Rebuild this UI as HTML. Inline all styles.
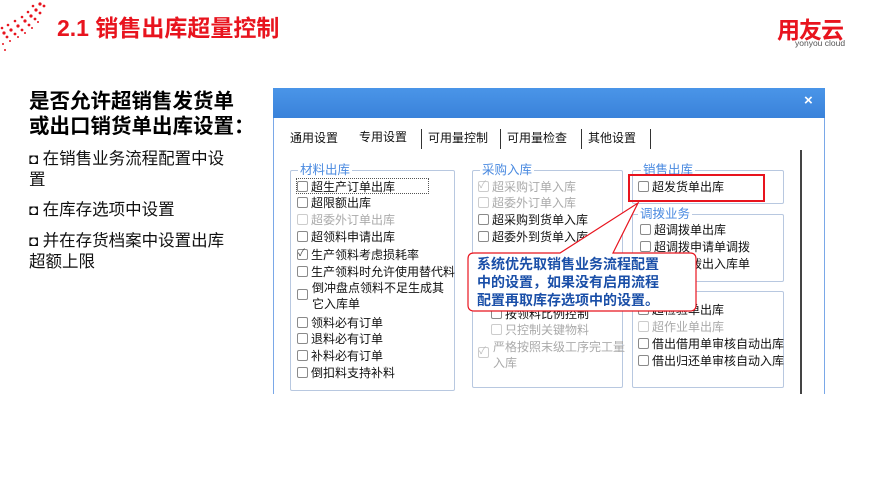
<!DOCTYPE html>
<html><head><meta charset="utf-8"><style>
*{margin:0;padding:0;box-sizing:border-box}
body{width:869px;height:488px;overflow:hidden;background:#fff;position:relative;font-family:"Liberation Sans","Noto Sans CJK SC",sans-serif}
.a{position:absolute;white-space:nowrap}
.t{font-size:12px;color:#111;line-height:14px}
.g{color:#aaa}
.cb{display:inline-block;width:11px;height:11px;border:1px solid #8a8a8a;border-radius:2px;background:#fff;vertical-align:-1px;margin-right:3px;position:relative}
.g .cb{border-color:#ccc}
.ck::after{content:"✓";position:absolute;left:0px;top:-3px;font-size:10px;color:#444}
.g .ck::after{color:#bbb}
.box{position:absolute;border:1px solid #b8c8e0;border-radius:2px}
.lg{position:absolute;background:#fff;color:#4a8ae0;font-size:12.5px;padding:0 2px;line-height:13px}
.bl{font-size:16.5px;line-height:20px;color:#111;white-space:normal;width:202px}
</style></head><body>
<svg class="a" style="left:0;top:0" width="60" height="55">
<g fill="#e8141e">
<circle cx="40" cy="4" r="1.6"/><circle cx="36" cy="10" r="1.6"/><circle cx="31" cy="16" r="1.6"/><circle cx="25" cy="21" r="1.6"/><circle cx="18" cy="26" r="1.6"/><circle cx="11" cy="30" r="1.6"/><circle cx="4" cy="33" r="1.6"/>
<circle cx="44" cy="6" r="1.4"/><circle cx="40" cy="13" r="1.4"/><circle cx="35" cy="19" r="1.4"/><circle cx="29" cy="25" r="1.4"/><circle cx="22" cy="30" r="1.4"/><circle cx="15" cy="34" r="1.4"/><circle cx="7" cy="37" r="1.4"/>
<circle cx="33" cy="6" r="1.3"/><circle cx="28" cy="12" r="1.3"/><circle cx="22" cy="17" r="1.3"/><circle cx="15" cy="21" r="1.3"/><circle cx="8" cy="25" r="1.3"/><circle cx="2" cy="28" r="1.3"/>
<circle cx="38" cy="22" r="1"/><circle cx="32" cy="28" r="1"/><circle cx="25" cy="33" r="1"/><circle cx="18" cy="37" r="1"/><circle cx="10" cy="41" r="1"/><circle cx="3" cy="44" r="1"/><circle cx="5" cy="50" r="1"/>
</g></svg>
<div class="a" style="left:57px;top:9px;font-size:23px;font-weight:bold;color:#e8141e">2.1 销售出库超量控制</div>
<div class="a" style="left:777px;top:11px;font-size:23px;font-weight:bold;color:#e8141e;letter-spacing:-1px">用友云</div>
<div class="a" style="left:795px;top:38px;font-size:8.5px;color:#555">yonyou cloud</div>
<div class="a" style="left:29px;top:89px;font-size:20.5px;font-weight:bold;line-height:25px;color:#000">是否允许超销售发货单<br>或出口销货单出库设置：</div>
<div class="a bl" style="left:29px;top:149px"><b style="font-size:15px">◘</b> 在销售业务流程配置中设置</div>
<div class="a bl" style="left:29px;top:200px"><b style="font-size:15px">◘</b> 在库存选项中设置</div>
<div class="a bl" style="left:29px;top:231px"><b style="font-size:15px">◘</b> 并在存货档案中设置出库超额上限</div>
<!-- dialog -->
<div class="a" style="left:273px;top:88px;width:552px;height:306px;background:#fff;border:1px solid #7aa8e8;border-bottom:none"></div>
<div class="a" style="left:273px;top:88px;width:552px;height:30px;background:linear-gradient(#4a95e8,#3a82da)"></div>
<div class="a" style="left:804px;top:92px;color:#fff;font-size:15px;font-weight:bold">×</div>
<div class="a" style="left:800px;top:150px;width:2px;height:244px;background:#444"></div>
<div class="a t" style="left:290px;top:131px">通用设置</div>
<div class="a t" style="left:359px;top:130px">专用设置</div>
<div class="a" style="left:421px;top:129px;width:1px;height:20px;background:#333"></div>
<div class="a t" style="left:428px;top:131px">可用量控制</div>
<div class="a" style="left:500px;top:129px;width:1px;height:20px;background:#333"></div>
<div class="a t" style="left:507px;top:131px">可用量检查</div>
<div class="a" style="left:581px;top:129px;width:1px;height:20px;background:#333"></div>
<div class="a t" style="left:588px;top:131px">其他设置</div>
<div class="a" style="left:650px;top:129px;width:1px;height:20px;background:#333"></div>
<div class="box" style="left:290px;top:170px;width:165px;height:221px"></div>
<div class="lg" style="left:298px;top:164px">材料出库</div>
<div class="box" style="left:472px;top:170px;width:151px;height:218px"></div>
<div class="lg" style="left:480px;top:164px">采购入库</div>
<div class="box" style="left:632px;top:170px;width:152px;height:34px"></div>
<div class="lg" style="left:641px;top:164px">销售出库</div>
<div class="box" style="left:632px;top:214px;width:152px;height:68px"></div>
<div class="lg" style="left:638px;top:208px">调拨业务</div>
<div class="box" style="left:632px;top:291px;width:152px;height:97px"></div>
<div class="a" style="left:296px;top:178px;width:133px;height:16px;border:1px dotted #555"></div>
<div class="a t" style="left:297px;top:180px"><span class="cb"></span>超生产订单出库</div>
<div class="a t" style="left:297px;top:196px"><span class="cb"></span>超限额出库</div>
<div class="a t g" style="left:297px;top:213px"><span class="cb"></span>超委外订单出库</div>
<div class="a t" style="left:297px;top:230px"><span class="cb"></span>超领料申请出库</div>
<div class="a t" style="left:297px;top:248px"><span class="cb ck"></span>生产领料考虑损耗率</div>
<div class="a t" style="left:297px;top:265px"><span class="cb"></span>生产领料时允许使用替代料</div>
<div class="a t" style="left:297px;top:288px"><span class="cb"></span></div>
<div class="a t" style="left:312px;top:280px;line-height:16px">倒冲盘点领料不足生成其<br>它入库单</div>
<div class="a t" style="left:297px;top:316px"><span class="cb"></span>领料必有订单</div>
<div class="a t" style="left:297px;top:332px"><span class="cb"></span>退料必有订单</div>
<div class="a t" style="left:297px;top:349px"><span class="cb"></span>补料必有订单</div>
<div class="a t" style="left:297px;top:366px"><span class="cb"></span>倒扣料支持补料</div>
<div class="a t g" style="left:478px;top:180px"><span class="cb ck"></span>超采购订单入库</div>
<div class="a t g" style="left:478px;top:196px"><span class="cb"></span>超委外订单入库</div>
<div class="a t" style="left:478px;top:213px"><span class="cb"></span>超采购到货单入库</div>
<div class="a t" style="left:478px;top:230px"><span class="cb"></span>超委外到货单入库</div>
<div class="a t" style="left:491px;top:307px"><span class="cb"></span>按领料比例控制</div>
<div class="a t g" style="left:491px;top:323px"><span class="cb"></span>只控制关键物料</div>
<div class="a t g" style="left:478px;top:346px"><span class="cb ck"></span></div>
<div class="a t g" style="left:493px;top:339px;line-height:16px">严格按照末级工序完工量<br>入库</div>
<div class="a t" style="left:638px;top:180px"><span class="cb"></span>超发货单出库</div>
<div class="a" style="left:628px;top:174px;width:137px;height:28px;border:2px solid #e8141e"></div>
<div class="a t" style="left:640px;top:223px"><span class="cb"></span>超调拨单出库</div>
<div class="a t" style="left:640px;top:240px"><span class="cb"></span>超调拨申请单调拨</div>
<div class="a t" style="left:640px;top:257px"><span class="cb"></span>按款调拨出入库单</div>
<div class="a t" style="left:638px;top:303px"><span class="cb"></span>超检验单出库</div>
<div class="a t g" style="left:638px;top:320px"><span class="cb"></span>超作业单出库</div>
<div class="a t" style="left:638px;top:337px"><span class="cb"></span>借出借用单审核自动出库</div>
<div class="a t" style="left:638px;top:354px"><span class="cb"></span>借出归还单审核自动入库</div>
<!-- callout -->
<svg class="a" style="left:466px;top:200px" width="234" height="115">
<path d="M8 53 H94 L172 3 L147 53 H224 Q230 53 230 59 V105 Q230 111 224 111 H8 Q2 111 2 105 V59 Q2 53 8 53 Z" fill="#fff" stroke="#e8141e" stroke-width="1.2"/>
</svg>
<div class="a" style="left:477px;top:255px;font-size:14px;font-weight:bold;color:#1a4fa8;line-height:18px">系统优先取销售业务流程配置<br>中的设置，如果没有启用流程<br>配置再取库存选项中的设置。</div>
</body></html>
